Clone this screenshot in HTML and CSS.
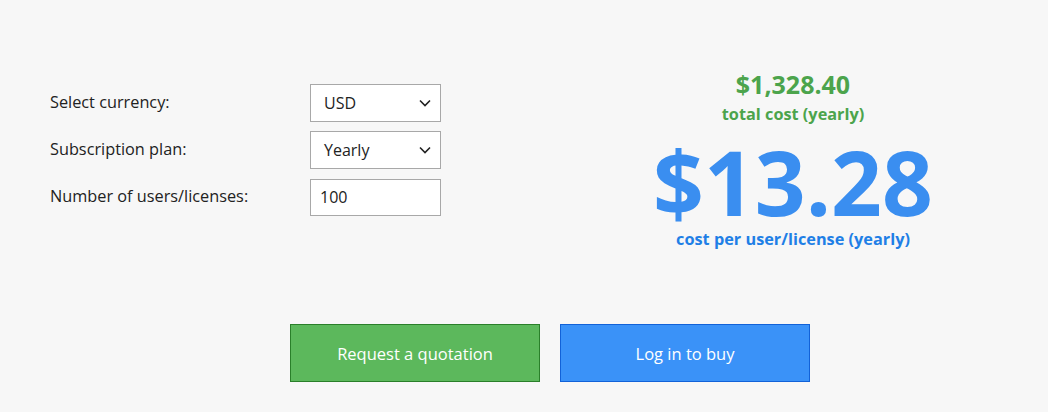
FILE: index.html
```html
<!DOCTYPE html>
<html>
<head>
<meta charset="utf-8">
<link rel="stylesheet" href="styles.css">
</head>
<body>
<div class="page">
  <div class="top">
    <div class="form">
      <div class="row">
        <label class="lbl">Select currency:</label>
        <div class="field select"><span>USD</span><svg class="chev" viewBox="0 0 12 8" width="12" height="8"><path d="M1 1.5 L6 6.5 L11 1.5" fill="none" stroke="#222" stroke-width="1.6"/></svg></div>
      </div>
      <div class="row">
        <label class="lbl">Subscription plan:</label>
        <div class="field select"><span>Yearly</span><svg class="chev" viewBox="0 0 12 8" width="12" height="8"><path d="M1 1.5 L6 6.5 L11 1.5" fill="none" stroke="#222" stroke-width="1.6"/></svg></div>
      </div>
      <div class="row">
        <label class="lbl">Number of users/licenses:</label>
        <div class="field input"><span>100</span></div>
      </div>
    </div>
    <div class="result">
      <div class="total">$1,328.40</div>
      <div class="total-lbl">total cost (yearly)</div>
      <div class="price">$13.28</div>
      <div class="price-lbl">cost per user/license (yearly)</div>
    </div>
  </div>
  <div class="buttons">
    <button class="btn green">Request a quotation</button>
    <button class="btn blue">Log in to buy</button>
  </div>
</div>
</body>
</html>
```
FILE: styles.css
```css
html, body { margin: 0; padding: 0; }
body {
  background: #f7f7f7;
  font-family: "Open Sans", "Noto Sans", sans-serif;
  color: #222;
  width: 1048px;
  height: 412px;
  overflow: hidden;
}
.page { padding-top: 68px; }
.top { display: flex; height: 256px; }
.form { margin-left: 50px; width: 391px; padding-top: 16px; display: flex; flex-direction: column; gap: 9px; }
.row { display: flex; align-items: center; justify-content: space-between; height: 38px; }
.lbl { font-size: 16.3px; margin-top: -3px; }
.field {
  box-sizing: border-box;
  width: 131px; height: 38px;
  border: 1px solid #a8a8a8;
  background: #fff;
  display: flex; align-items: center; justify-content: space-between;
  padding: 0 9px 0 13px;
  font-size: 16px;
}
.field.input { height: 37px; padding-left: 9px; }
.chev { display: block; }
.result { margin-left: 182px; width: 340px; display: flex; flex-direction: column; align-items: center; margin-top: -1px; }
.total { color: #4ca44c; font-weight: 700; font-size: 25px; line-height: 34px; }
.total-lbl { color: #4ca44c; font-weight: 700; font-size: 16.3px; line-height: 22px; margin-top: 2px; }
.price { color: #3a8ef0; font-weight: 700; font-size: 89px; line-height: 80px; margin-top: 17px; }
.price-lbl { color: #1f7fe6; font-weight: 700; font-size: 16.3px; line-height: 22px; margin-top: 6px; }
.buttons { display: flex; justify-content: flex-start; gap: 20px; margin-left: 290px; }
.btn {
  box-sizing: border-box;
  width: 250px; height: 58px;
  font-family: "Open Sans", "Noto Sans", sans-serif;
  font-size: 16.5px; color: #fff;
  cursor: pointer;
}
.btn.green { background: #5cb85c; border: 1px solid #2a7f2a; }
.btn.blue { background: #3a92f8; border: 1px solid #1262d8; }
```
